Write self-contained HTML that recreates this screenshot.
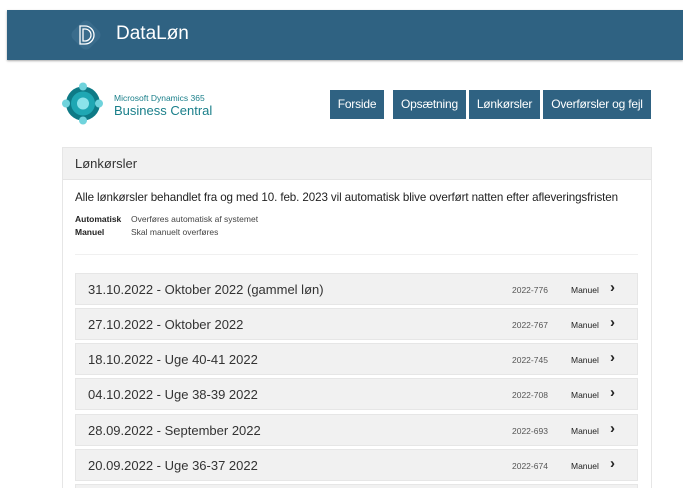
<!DOCTYPE html>
<html><head><meta charset="utf-8"><style>
html,body{margin:0;width:683px;height:501px;overflow:hidden;background:#fff;font-family:"Liberation Sans",sans-serif;position:relative}
.hdr{position:absolute;left:7px;top:10px;width:676px;height:50px;background:#2f6282;box-shadow:0 1px 2px #aaa}
.hdr .t{position:absolute;left:109px;top:13px;color:#fff;font-size:19px}
.btn{position:absolute;top:90px;height:29px;background:#2f6282;color:#fff;font-size:12px;line-height:29px;text-align:center;letter-spacing:-0.2px}
.card{position:absolute;left:62px;top:147px;width:588px;height:340px;border:1px solid #e6e6e6;border-bottom:none;overflow:hidden}
.ch{height:31px;background:#f1f1f1;border-bottom:1px solid #e4e4e4;font-size:13px;color:#333;line-height:31px;padding-left:12px}
.row{position:absolute;left:12px;width:563px;height:32px;background:#f1f1f1;border:1px solid #e6e6e6;box-sizing:border-box;font-size:13px;color:#333}
.row .d{position:absolute;left:12px;top:8px}
.row .n{position:absolute;left:436px;top:11px;font-size:8.5px;color:#555}
.row .m{position:absolute;left:495px;top:11px;font-size:8.5px;color:#222}
.row .a{position:absolute;left:534px;top:5px;font-size:15px;font-weight:bold;color:#222}
</style></head><body>
<div class="hdr">
<svg style="position:absolute;left:60px;top:6px" width="38" height="38" viewBox="0 0 38 38"><rect x="7" y="7" width="24" height="24" rx="6" transform="rotate(45 19 19)" fill="#3a6c8c"/><path d="M13 10h5a9 9 0 0 1 0 18h-5zM16 13v12h2a6 6 0 0 0 0-12z" fill="none" stroke="#fff" stroke-width="1.3"/></svg>
<div class="t">DataLøn</div></div>
<svg style="position:absolute;left:62px;top:82px" width="42" height="43" viewBox="0 0 42 43"><circle cx="21" cy="21.5" r="17" fill="#0e7a86"/><circle cx="21" cy="21.5" r="12" fill="#1fa7b3"/><circle cx="21" cy="21.5" r="6" fill="#8be3ea"/><circle cx="21" cy="4.5" r="4" fill="#6fd3dc"/><circle cx="21" cy="38.5" r="4" fill="#6fd3dc"/><circle cx="4" cy="21.5" r="4" fill="#6fd3dc"/><circle cx="37" cy="21.5" r="4" fill="#6fd3dc"/></svg>
<div style="position:absolute;left:114px;top:93px;font-size:8.5px;color:#1a7f8a">Microsoft Dynamics 365</div>
<div style="position:absolute;left:114px;top:103px;font-size:13px;color:#1a7f8a">Business Central</div>
<div class="btn" style="left:330px;width:54px">Forside</div>
<div class="btn" style="left:393px;width:73px">Opsætning</div>
<div class="btn" style="left:469px;width:71px">Lønkørsler</div>
<div class="btn" style="left:543px;width:108px">Overførsler og fejl</div>
<div class="card"><div class="ch">Lønkørsler</div>
<div style="position:absolute;left:12px;top:43px;font-size:11.6px;color:#222;white-space:nowrap;letter-spacing:-0.1px">Alle lønkørsler behandlet fra og med 10. feb. 2023 vil automatisk blive overført natten efter afleveringsfristen</div>
<div style="position:absolute;left:12px;top:65px;font-size:8.5px;color:#222;line-height:13px"><b>Automatisk</b><br><b>Manuel</b></div>
<div style="position:absolute;left:68px;top:65px;font-size:8.5px;color:#444;line-height:13px">Overføres automatisk af systemet<br>Skal manuelt overføres</div>
<div style="position:absolute;left:12px;top:106px;width:563px;border-top:1px solid #f0f0f0"></div>
<div class="row" style="top:125px"><span class="d">31.10.2022 - Oktober 2022 (gammel løn)</span><span class="n">2022-776</span><span class="m">Manuel</span><span class="a">›</span></div>
<div class="row" style="top:160px"><span class="d">27.10.2022 - Oktober 2022</span><span class="n">2022-767</span><span class="m">Manuel</span><span class="a">›</span></div>
<div class="row" style="top:195px"><span class="d">18.10.2022 - Uge 40-41 2022</span><span class="n">2022-745</span><span class="m">Manuel</span><span class="a">›</span></div>
<div class="row" style="top:230px"><span class="d">04.10.2022 - Uge 38-39 2022</span><span class="n">2022-708</span><span class="m">Manuel</span><span class="a">›</span></div>
<div class="row" style="top:266px"><span class="d">28.09.2022 - September 2022</span><span class="n">2022-693</span><span class="m">Manuel</span><span class="a">›</span></div>
<div class="row" style="top:301px"><span class="d">20.09.2022 - Uge 36-37 2022</span><span class="n">2022-674</span><span class="m">Manuel</span><span class="a">›</span></div>
<div class="row" style="top:336px"></div>
</div>
</body></html>
